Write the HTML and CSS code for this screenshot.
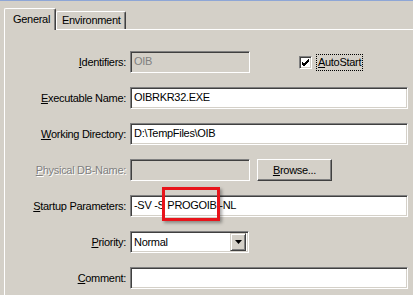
FILE: index.html
```html
<!DOCTYPE html>
<html lang="en">
<head>
    <meta charset="UTF-8">
    <meta name="viewport" content="width=device-width, initial-scale=1.0">
    <title>Properties</title>
    <link rel="stylesheet" href="styles.css">
</head>
<body>
    <div class="topline"></div>

    <!-- Tab strip -->
    <div class="tabs">
        <div class="tab active">General</div>
        <div class="tab">Environment</div>
    </div>

    <div class="panel">
        <div class="form">
            <label class="lbl"><u>I</u>dentifiers:</label>
            <div class="field">
                <div class="edit short disabled">OIB</div>
                <div class="check">
                    <span class="box">
                        <svg width="9" height="9" viewBox="0 0 9 9"><path d="M1 4 L3 6 L8 1 M1 5 L3 7 L8 2 M1 6 L3 8 L8 3" stroke="#000" stroke-width="1" fill="none"/></svg>
                    </span>
                    <span class="focus"><u>A</u>utoStart</span>
                </div>
            </div>

            <label class="lbl"><u>E</u>xecutable Name:</label>
            <div class="field"><div class="edit">OIBRKR32.EXE</div></div>

            <label class="lbl"><u>W</u>orking Directory:</label>
            <div class="field"><div class="edit">D:\TempFiles\OIB</div></div>

            <label class="lbl off"><u>P</u>hysical DB-Name:</label>
            <div class="field">
                <div class="edit short disabled"></div>
                <div class="button"><u>B</u>rowse...</div>
            </div>

            <label class="lbl"><u>S</u>tartup Parameters:</label>
            <div class="field">
                <div class="edit">-SV -S PROGOIB -NL</div>
                <div class="mark"></div>
            </div>

            <label class="lbl"><u>P</u>riority:</label>
            <div class="field">
                <div class="combo">
                    <span class="value">Normal</span>
                    <span class="drop">
                        <svg width="7" height="4" viewBox="0 0 7 4"><path d="M0 0 H7 L3.5 4 Z" fill="#000"/></svg>
                    </span>
                </div>
            </div>

            <label class="lbl"><u>C</u>omment:</label>
            <div class="field"><div class="edit"></div></div>
        </div>
    </div>
</body>
</html>
```

FILE: styles.css
```css
body {
    margin: 0;
    background-color: #d4d0c8;
    font-family: "Liberation Sans", Arial, sans-serif;
    font-size: 11px;
    letter-spacing: -0.3px;
    color: #000;
    overflow: hidden;
}
u {
    text-decoration: underline;
    text-underline-offset: 1px;
}
.topline {
    height: 1px;
    background: #8ea6d6;
}

/* tabs */
.tabs {
    display: flex;
    align-items: flex-end;
    margin: 7px 0 0 4px;
    height: 21px;
}
.tab {
    position: relative;
    box-sizing: border-box;
    height: 18px;
    padding: 2px 0 0 5px;
    border: 1px solid #fff;
    border-bottom: none;
    border-right-color: #404040;
    border-radius: 2px 2px 0 0;
    box-shadow: inset -1px 0 #808080;
    width: 70px;
}
.tab.active {
    z-index: 2;
    height: 22px;
    width: 52px;
    padding: 4px 0 0 8px;
    margin-bottom: -1px;
    background: #d4d0c8;
}

/* panel */
.panel {
    margin-left: 4px;
    border-left: 1px solid #fff;
    border-top: 1px solid #fff;
    padding: 21px 5px 0 0;
    height: 244px;
}
.form {
    display: grid;
    grid-template-columns: 121px 1fr;
    grid-auto-rows: 22px;
    column-gap: 4px;
    row-gap: 14px;
}
.lbl {
    display: flex;
    align-items: center;
    justify-content: flex-end;
    white-space: nowrap;
}
.lbl.off {
    color: #808080;
    text-shadow: 1px 1px #fff;
}
.field {
    position: relative;
    display: flex;
    align-items: center;
}

/* sunken edit */
.edit {
    box-sizing: border-box;
    height: 22px;
    flex: 1;
    padding-left: 3px;
    line-height: 18px;
    background: #fff;
    border-top: 1px solid #808080;
    border-left: 1px solid #808080;
    border-bottom: 1px solid #fff;
    border-right: 1px solid #fff;
    box-shadow: inset 1px 1px #404040, inset -1px -1px #d4d0c8;
    white-space: nowrap;
}
.edit.short {
    flex: none;
    width: 120px;
}
.edit.disabled {
    background: #d4d0c8;
    color: #808080;
}

/* checkbox */
.check {
    display: flex;
    align-items: center;
    margin-left: 49px;
}
.box {
    box-sizing: border-box;
    width: 13px;
    height: 13px;
    background: #fff;
    border-top: 1px solid #808080;
    border-left: 1px solid #808080;
    border-bottom: 1px solid #fff;
    border-right: 1px solid #fff;
    box-shadow: inset 1px 1px #404040, inset -1px -1px #d4d0c8;
    display: flex;
    align-items: center;
    justify-content: center;
}
.focus {
    margin-left: 5px;
    padding: 1px 1px 2px 1px;
    outline: 1px dotted #000;
}

/* button */
.button {
    box-sizing: border-box;
    margin-left: 7px;
    width: 75px;
    height: 22px;
    line-height: 20px;
    text-align: center;
    border-top: 1px solid #fff;
    border-left: 1px solid #fff;
    border-bottom: 1px solid #404040;
    border-right: 1px solid #404040;
    box-shadow: inset -1px -1px #808080;
}

/* combo */
.combo {
    box-sizing: border-box;
    width: 119px;
    height: 22px;
    display: flex;
    align-items: center;
    justify-content: space-between;
    background: #fff;
    border-top: 1px solid #808080;
    border-left: 1px solid #808080;
    border-bottom: 1px solid #fff;
    border-right: 1px solid #fff;
    box-shadow: inset 1px 1px #404040, inset -1px -1px #d4d0c8;
    padding: 2px;
}
.value {
    padding-left: 1px;
}
.drop {
    box-sizing: border-box;
    width: 16px;
    height: 18px;
    background: #d4d0c8;
    border-top: 1px solid #d4d0c8;
    border-left: 1px solid #d4d0c8;
    border-bottom: 1px solid #404040;
    border-right: 1px solid #404040;
    box-shadow: inset 1px 1px #fff, inset -1px -1px #808080;
    display: flex;
    align-items: center;
    justify-content: center;
}

/* highlight box drawn over the startup parameters */
.mark {
    position: absolute;
    left: 32px;
    top: -8px;
    width: 52px;
    height: 28px;
    border: 3px solid #e8141b;
    box-shadow: 2px 2px 3px rgba(0, 0, 0, 0.35);
}
```
